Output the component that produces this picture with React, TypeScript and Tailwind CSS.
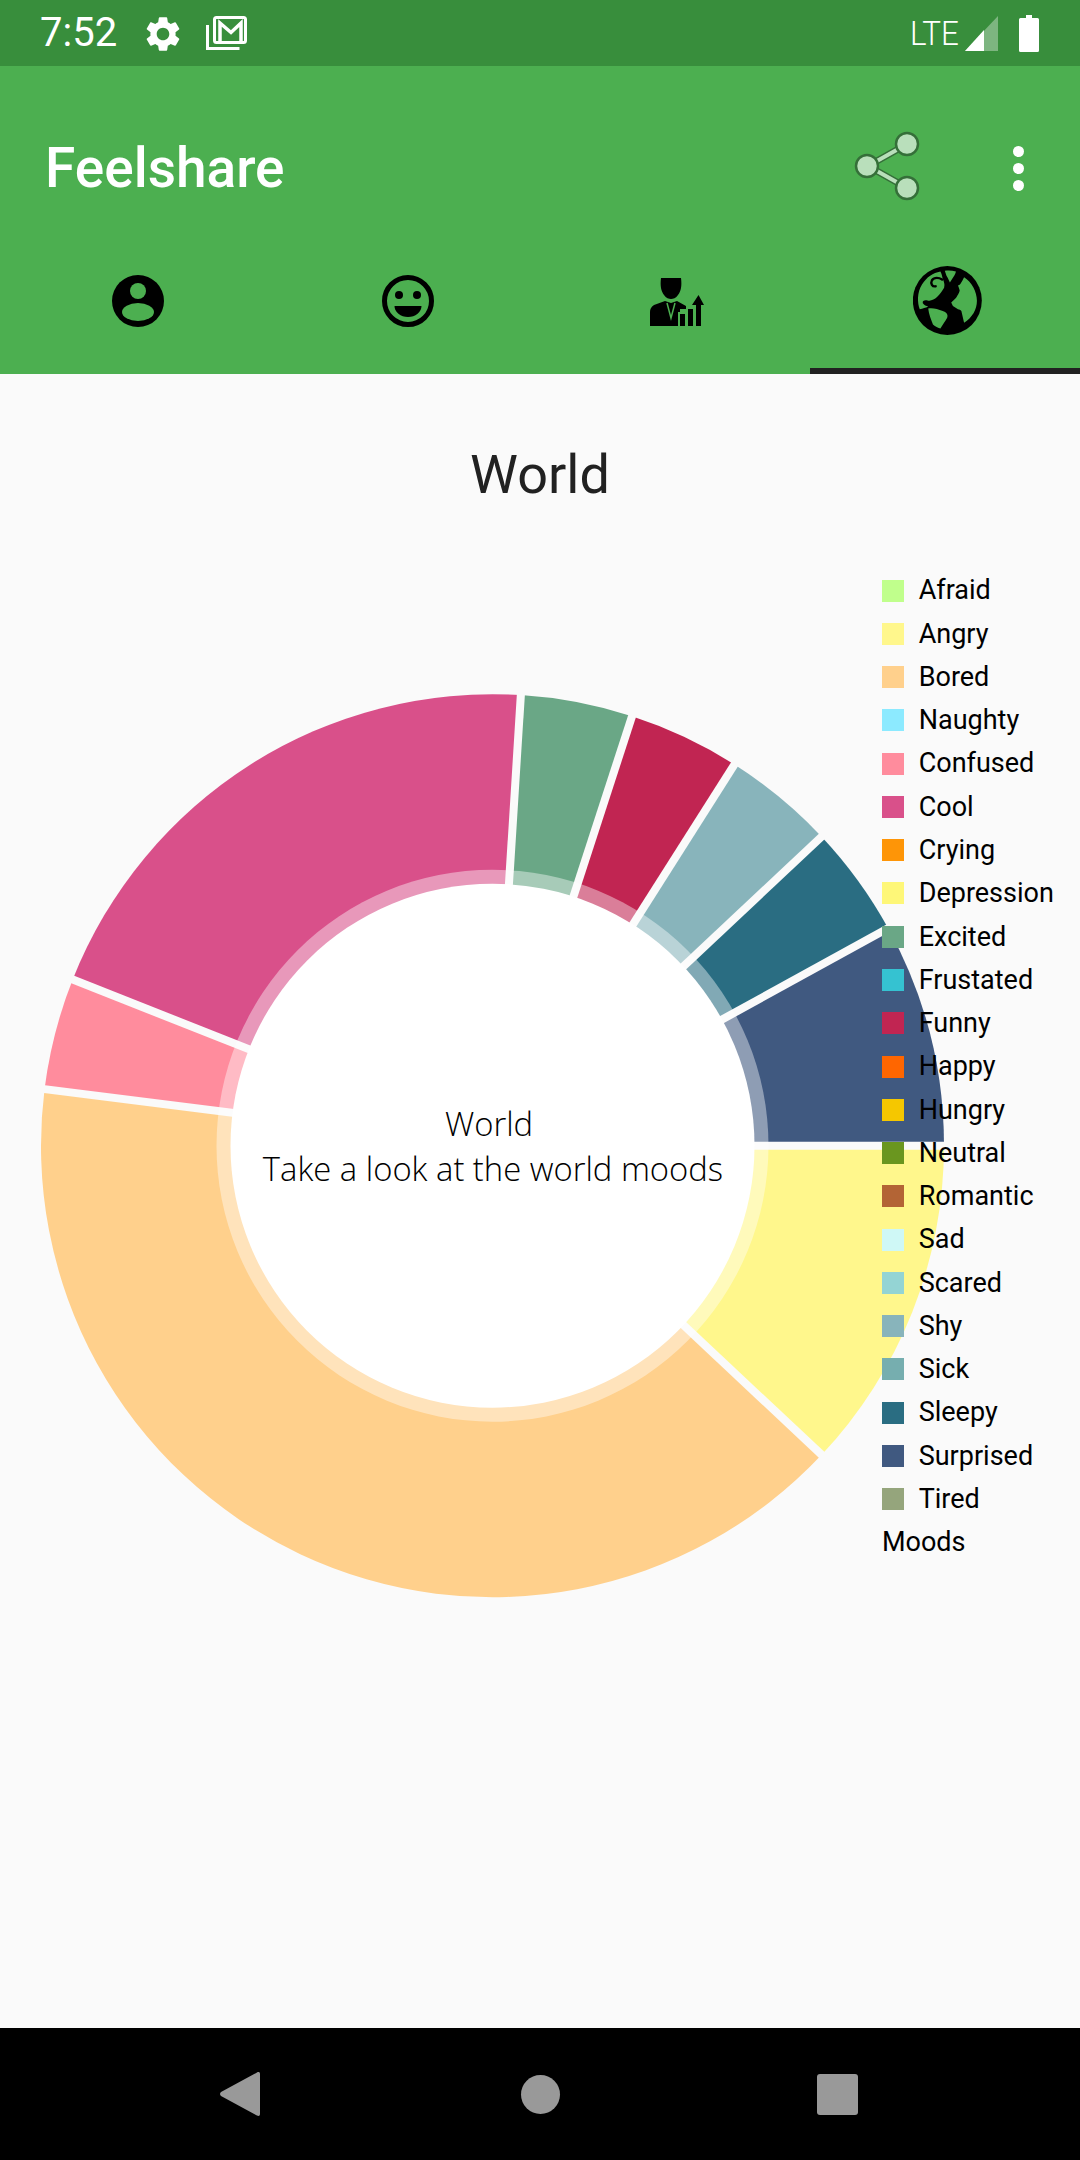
import React from 'react';
import { MdSettings } from 'react-icons/md';

const GREEN = '#4CAF50';

const legend: [string, string][] = [
  ['Afraid', '#C0FF8C'],
  ['Angry', '#FFF78C'],
  ['Bored', '#FFD08C'],
  ['Naughty', '#8CEAFF'],
  ['Confused', '#FF8C9D'],
  ['Cool', '#D9508A'],
  ['Crying', '#FE9507'],
  ['Depression', '#FEF778'],
  ['Excited', '#6AA786'],
  ['Frustated', '#35C2D1'],
  ['Funny', '#C12552'],
  ['Happy', '#FF6600'],
  ['Hungry', '#F5C700'],
  ['Neutral', '#6A961F'],
  ['Romantic', '#B36435'],
  ['Sad', '#CFF8F6'],
  ['Scared', '#94D4D4'],
  ['Shy', '#88B4BB'],
  ['Sick', '#76AEAF'],
  ['Sleepy', '#2A6D82'],
  ['Surprised', '#405980'],
  ['Tired', '#95A57C'],
];

// percent of the ring, clockwise from 3 o'clock
const slices: [number, string][] = [
  [12, '#FFF78C'],
  [40, '#FFD08C'],
  [4, '#FF8C9D'],
  [20, '#D9508A'],
  [4, '#6AA786'],
  [4, '#C12552'],
  [4, '#88B4BB'],
  [4, '#2A6D82'],
  [8, '#405980'],
];

const CX = 492.5;
const CY = 605.7;
const R = 451.5;
const HOLE = 262;

const pt = (r: number, deg: number) => {
  const a = (deg * Math.PI) / 180;
  return `${CX + r * Math.cos(a)} ${CY + r * Math.sin(a)}`;
};

const Donut = () => {
  let start = 0;
  const parts = slices.map(([pct, color]) => {
    const from = start;
    const to = start + pct * 3.6;
    start = to;
    return { from, to, color };
  });
  return (
    <svg width="1080" height="1100" viewBox="0 0 1080 1100" className="block">
      {parts.map((p) => (
        <path
          key={p.from}
          fill={p.color}
          d={`M${CX} ${CY} L${pt(R, p.from)} A${R} ${R} 0 ${p.to - p.from > 180 ? 1 : 0} 1 ${pt(R, p.to)} Z`}
        />
      ))}
      {parts.map((p) => (
        <line
          key={p.from}
          x1={CX}
          y1={CY}
          x2={CX + (R + 4) * Math.cos((p.from * Math.PI) / 180)}
          y2={CY + (R + 4) * Math.sin((p.from * Math.PI) / 180)}
          stroke="#FAFAFA"
          strokeWidth="8"
        />
      ))}
      <circle cx={CX} cy={CY} r="276" fill="#fff" fillOpacity="0.41" />
      <circle cx={CX} cy={CY} r={HOLE} fill="#fff" />
    </svg>
  );
};

const GmailIcon = () => (
  <svg width="41" height="34" viewBox="0 0 41 34" fill="none" stroke="#fff" strokeWidth="3">
    <path d="M1.500 9v23.500h32" />
    <rect x="8.500" y="1.500" width="31" height="25" rx="2" />
    <path d="M14 26V7l11 9.500L35 7v19" strokeWidth="3.500" />
  </svg>
);

const SignalIcon = () => (
  <svg width="33" height="35" viewBox="0 0 33 35">
    <path d="M33 0v35H0z" fill="#fff" fillOpacity="0.35" />
    <path d="M19 14v21H0z" fill="#fff" />
  </svg>
);

const BatteryIcon = () => (
  <svg width="20" height="37" viewBox="0 0 20 37">
    <path d="M7 0h6v3h5.500a1.500 1.500 0 0 1 1.500 1.500v31a1.500 1.500 0 0 1-1.500 1.500h-17A1.500 1.500 0 0 1 0 35.500v-31A1.500 1.500 0 0 1 1.500 3H7z" fill="#fff" />
  </svg>
);

const ShareIcon = () => (
  <svg width="66" height="72" viewBox="0 0 66 72">
    <path d="M14 36L55 13M14 36l41 23" stroke="#356F39" strokeWidth="7" fill="none" />
    <path d="M14 36L55 13M14 36l41 23" stroke="#B9DFBB" strokeWidth="4" fill="none" />
    <g fill="#B9DFBB" stroke="#356F39" strokeWidth="2.500">
      <circle cx="13" cy="36" r="11" />
      <circle cx="53" cy="14" r="11" />
      <circle cx="53" cy="58" r="11" />
    </g>
  </svg>
);

const AccountIcon = () => (
  <svg width="52" height="52" viewBox="0 0 52 52">
    <circle cx="26" cy="26" r="26" fill="#000" />
    <circle cx="26" cy="16" r="8" fill={GREEN} />
    <ellipse cx="26" cy="37" rx="16" ry="9" fill={GREEN} />
  </svg>
);

const SmileIcon = () => (
  <svg width="52" height="52" viewBox="0 0 52 52">
    <circle cx="26" cy="26" r="23.500" fill="none" stroke="#000" strokeWidth="5" />
    <circle cx="17" cy="20" r="4" fill="#000" />
    <circle cx="35" cy="20" r="4" fill="#000" />
    <path d="M12.500 31h27a13.500 11 0 0 1-27 0z" fill="#000" />
  </svg>
);

const BusinessIcon = () => (
  <svg width="54" height="48" viewBox="0 0 54 48">
    <path d="M11 0h20c1 8 0 13-3 17-2 3-5 4-7 4s-5-1-7-4c-3-4-4-9-3-17z" fill="#000" />
    <path d="M0 48V34c0-3 1-5 4-7l11-4 6 2 6-2 9 5v3h-6v17z" fill="#000" />
    <path d="M17 25l4 15 4-15" fill="none" stroke={GREEN} strokeWidth="1.500" />
    <rect x="28" y="34" width="8" height="14" fill={GREEN} />
    <rect x="30" y="36" width="5" height="12" fill="#000" />
    <rect x="38" y="31" width="5" height="17" fill="#000" />
    <path d="M46 27h5v21h-5zM42 27l6.500-10L54 27z" fill="#000" />
  </svg>
);

const GlobeIcon = () => (
  <svg width="69" height="69" viewBox="27 22 204 204">
    <circle cx="128.500" cy="124" r="102" fill="#000" />
    <g fill={GREEN}>
      <path d="M121 36c11-2 22-1 33 2-2 8-6 14-10 20l-8 13c-4-8-6-15-10-20z" />
      <path d="M108 38c4 7 5 14 7 22 3 8 7 16 4 26-6 10-13 20-21 28-8 8-18 12-28 10-8-2-16 0-14 8 4 6 10 8 16 10-8 4-16 6-25 8-7-18-9-50 7-74 14-22 32-34 54-38z" />
      <path d="M178 55c22 14 38 42 38 70 0 26-14 50-38 65l-8-35c-3-3-6-4-10-5l-15-10-5-10c5-6 11-9 15-15 4-7 8-13 10-20-1-6-3-10-5-15 3-1 5-3 7-5 4-6 8-13 11-20z" />
      <path d="M72 148c13-3 28 2 43 7 10 3 17 10 13 20-6 11-13 20-20 32-10-3-16-7-22-12-6-15-12-30-14-47z" />
    </g>
    <path d="M113 62c-9-6-23-8-30 2-5 10 1 20 11 18" fill="none" stroke="#000" strokeWidth="7" strokeLinecap="round" />
  </svg>
);

export default function App() {
  return (
    <div className="flex h-[2160px] w-[1080px] flex-col bg-[#FAFAFA] font-['Roboto',sans-serif]">
      <div className="flex h-[66px] items-center bg-[#388E3C] pl-[40px] pr-[41px] text-white">
        <span className="text-[40px] leading-none">7:52</span>
        <MdSettings className="ml-[25px] mt-[2px]" size={42} />
        <span className="ml-[22px] flex">
          <GmailIcon />
        </span>
        <span className="ml-auto w-[47px] origin-left scale-x-95 text-[33px] font-light leading-none">LTE</span>
        <span className="ml-[8px] flex">
          <SignalIcon />
        </span>
        <span className="ml-[21px] flex">
          <BatteryIcon />
        </span>
      </div>

      <header className="bg-[#4CAF50]">
        <div className="flex h-[160px] items-center pl-[45px] pr-[56px] pt-[44px] text-white">
          <span className="text-[55px] font-medium leading-none">Feelshare</span>
          <span className="-mt-[4px] ml-auto flex">
            <ShareIcon />
          </span>
          <div className="ml-[93px] flex flex-col gap-[6px]">
            <span className="h-[11px] w-[11px] rounded-full bg-white" />
            <span className="h-[11px] w-[11px] rounded-full bg-white" />
            <span className="h-[11px] w-[11px] rounded-full bg-white" />
          </div>
        </div>
        <div className="grid h-[148px] grid-cols-4">
          <div className="flex items-center justify-center pl-[5px] pt-[1px]">
            <AccountIcon />
          </div>
          <div className="flex items-center justify-center pl-[5px] pt-[1px]">
            <SmileIcon />
          </div>
          <div className="flex items-center justify-center pl-[4px] pt-[4px]">
            <BusinessIcon />
          </div>
          <div className="flex items-center justify-center border-b-[6px] border-[#212121] pl-[5px] pt-[7px]">
            <GlobeIcon />
          </div>
        </div>
      </header>

      <main className="flex flex-1 flex-col">
        <h1 className="mt-[71px] h-[60px] text-center text-[54px] font-normal leading-[60px] text-[#212121]">World</h1>
        <div className="relative mt-[35px] flex-1">
          <Donut />
          <div className="absolute left-[228px] top-[562px] w-[530px] text-center font-['Open_Sans',sans-serif] text-[32.800px] font-light leading-[44.6px] text-black">
            <div className="pr-[8px]">World</div>
            <div>Take a look at the world moods</div>
          </div>
          <ul className="absolute left-[882px] top-[29px] text-[27px] text-black">
            {legend.map(([name, color]) => (
              <li key={name} className="flex h-[43.270px] items-center gap-[14.700px]">
                <span className="h-[22px] w-[22px]" style={{ backgroundColor: color }} />
                <span>{name}</span>
              </li>
            ))}
            <li className="flex h-[43.270px] items-center">Moods</li>
          </ul>
        </div>
      </main>

      <nav className="flex h-[132px] items-center bg-black pl-[220px]">
        <svg width="40" height="46" viewBox="0 0 40 46">
          <path d="M37 1.500c1.500-1 3-.5 3 1.500v40c0 2-1.500 2.500-3 1.500L1 25c-1.300-1-1.300-3 0-4z" fill="#999" />
        </svg>
        <span className="ml-[261px] h-[39px] w-[39px] rounded-full bg-[#999]" />
        <span className="ml-[257px] h-[41px] w-[41px] rounded-[3px] bg-[#999]" />
      </nav>
    </div>
  );
}
